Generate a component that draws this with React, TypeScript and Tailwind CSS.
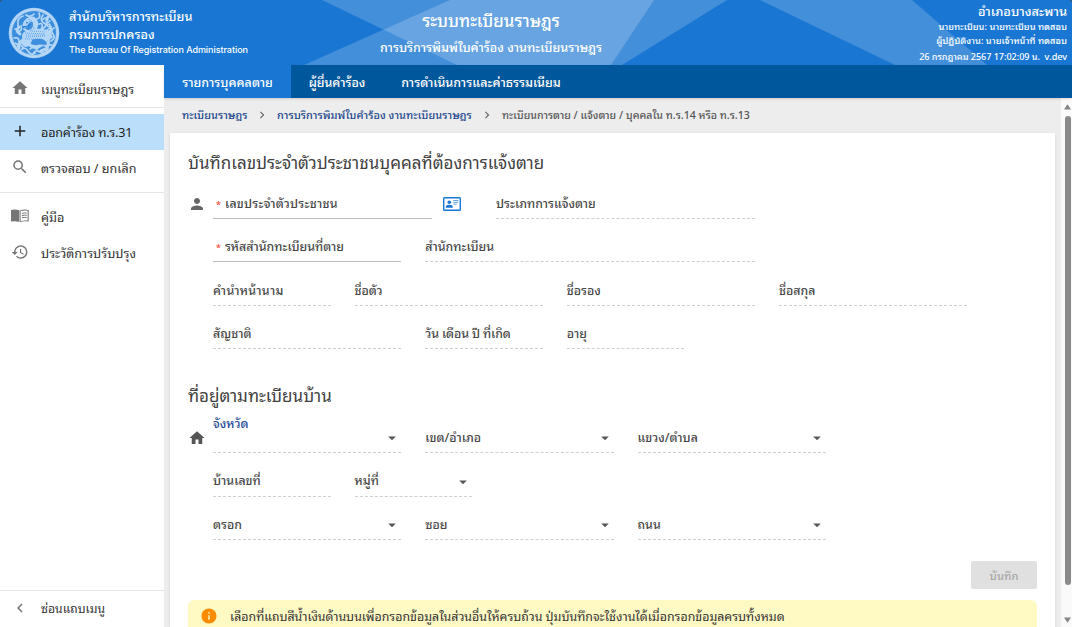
import type { ReactNode } from "react";
import {
  MdAdd,
  MdArrowDropDown,
  MdChevronLeft,
  MdChevronRight,
  MdHistory,
  MdHome,
  MdInfo,
  MdPerson,
  MdSearch,
} from "react-icons/md";

function Seal() {
  return (
    <svg viewBox="0 0 52 52" className="size-[52px] shrink-0">
      <circle cx="26" cy="26" r="25.3" fill="#a9cff3" />
      <circle cx="26" cy="26" r="22" fill="#3d8edd" />
      <circle cx="26" cy="26" r="23.6" fill="none" stroke="#c6e0f8" strokeWidth="1.2" strokeDasharray="1.2 1" />
      <g fill="none" stroke="#b4d7f7" strokeLinecap="round" strokeLinejoin="round">
        <path strokeWidth="5" d="M17 18q2-6 8-6 4 3 2 8l-2 7" />
        <path strokeWidth="10" d="M19 29q8-4 20-1M20 30l-2 5" />
        <path strokeWidth="3" d="M15 33q-6 4-4 8M20 37q5 4 12 2M37 32q6 3 1 10l-5 2M40 27q5-4 1-9t-1-8M12 27q-5-3-1-7" />
        <path strokeWidth="1.7" d="M7 22q4 1 3-5t5-8M10 25q5-2 3-6M31 6q2 5-2 6M35 8q-4 5 1 8t-3 6M42 14q-5 1-2 5t-4 5M46 21q-4 2-1 6t-2 7M6 31q5-1 5 3t5 7M13 43q4-4 7 1t7 2M25 47q2-5 7-2t7-2M44 38q-5-1-4 4M18 8q4 3 8-1M31 17q4-2 3 4M16 22q5 4 8 0M29 42q4-5 9-3M22 42q3-3 6 0M7 36q3 1 4 5M34 13q3-3 5-1M44 30q-4 2-3 5" />
      </g>
      <g fill="none" stroke="#4b96df" strokeWidth=".8" strokeDasharray="1 1">
        <path d="M17 26l20 1M18 28l20 0M18 30l20-1M17 32l18 0M22 24l16 1M18 16l7 4M23 13l3 9M21 12l3 12M13 37l5 4M35 39l5-6M41 23l-1-9" />
      </g>
      <path d="M18 15l2 1M22 17l-2 3M14 20l5-1" stroke="#1976d2" strokeWidth="1" />
    </svg>
  );
}

function Header() {
  return (
    <header className="relative flex h-[65px] shrink-0 overflow-hidden bg-[#1976d2] text-white">
      <svg viewBox="0 0 1072 65" className="absolute inset-0 h-[65px] w-[1072px]">
        <g fill="#fff" fillOpacity=".19">
          <path d="M322 0H654L611 65H457Z" />
          <path d="M304 65L450 0H727L622 65Z" />
          <path d="M760 0H912L987 65H895Z" />
        </g>
        <path d="M0 0H3Q0 0 0 3ZM1072 0h-3q3 0 3 3Z" fill="#44484d" />
      </svg>
      <div className="relative flex w-[360px] shrink-0 pt-[7px] pl-2">
        <Seal />
        <div className="flex flex-col pl-[9px] text-[12.6px] leading-[18px] font-medium whitespace-nowrap">
          <span className="-mt-px">สำนักบริหารการทะเบียน</span>
          <span>กรมการปกครอง</span>
          <span className="font-['Inter'] text-[9px] leading-[16px] tracking-[-0.05px]">The Bureau Of Registration Administration</span>
        </div>
      </div>
      <div className="relative flex w-[262px] shrink-0 flex-col items-center pt-[6px] whitespace-nowrap">
        <span className="text-[16.8px] leading-[27px] font-medium">ระบบทะเบียนราษฎร</span>
        <span className="text-[12.5px] leading-[27px] font-medium">การบริการพิมพ์ใบคำร้อง งานทะเบียนราษฎร</span>
      </div>
      <div className="relative flex flex-1 flex-col items-end pt-[2px] pr-[5px] text-[9.25px] leading-[14px] font-medium whitespace-nowrap">
        <span className="text-[12.8px] leading-[17px]">อำเภอบางสะพาน</span>
        <span>นายทะเบียน: นายทะเบียน ทดสอบ</span>
        <span>ผู้ปฏิบัติงาน: นายเจ้าหน้าที่ ทดสอบ</span>
        <span className="text-[9.1px] leading-[18px] tracking-[-0.06px]">26 กรกฎาคม 2567 17:02:09 น.&nbsp; v.dev</span>
      </div>
    </header>
  );
}

function MenuItem({ icon, children, active = false }: { icon: ReactNode; children: ReactNode; active?: boolean }) {
  return (
    <div
      className={`flex h-9 shrink-0 items-center gap-[11px] pl-[10px] text-[12.6px] whitespace-nowrap ${
        active ? "bg-[#bbdefb] text-[#222]" : "text-[#333]"
      }`}
    >
      <span className={`-mt-[2px] flex w-5 justify-center ${active ? "text-[#222]" : "text-[#757575]"}`}>{icon}</span>
      <span className="pb-[2px]">{children}</span>
    </div>
  );
}

function Sidebar() {
  return (
    <aside className="flex w-[164px] shrink-0 flex-col bg-white">
      <div className="border-b border-[#e5e5e5] pt-[6px]">
        <MenuItem icon={<MdHome size={18} />}>
          <span className="text-[12.4px] leading-[21px]">เมนูทะเบียนราษฎร</span>
        </MenuItem>
      </div>
      <div className="border-b border-[#e5e5e5] pt-[6px] pb-[6px]">
        <MenuItem active icon={<MdAdd size={18} />}>
          <span className="tracking-[-0.2px]">ออกคำร้อง ท.ร.31</span>
        </MenuItem>
        <MenuItem icon={<MdSearch size={18} />}>ตรวจสอบ / ยกเลิก</MenuItem>
      </div>
      <div className="pt-[6px]">
        <MenuItem
          icon={
            <svg viewBox="0 0 18 14" className="h-[14px] w-[18px]">
              <path fill="#757575" d="M0 .9Q4.5 0 8.5 1.2V13Q4.5 11.8 0 12.6ZM9.2 1.2Q13.2 0 17.7 .9V12.6Q13.2 11.8 9.2 13Z" />
              <path fill="#fff" d="M9.8 2.1Q13.2 1.1 16.6 1.7V11.6Q13 11 9.8 12Z" />
              <path stroke="#757575" fill="none" strokeWidth="1" d="M11 4.4q2.3-.7 4.7-.3M11 6.6q2.3-.7 4.7-.3M11 8.8q2.3-.7 4.7-.3" />
            </svg>
          }
        >
          คู่มือ
        </MenuItem>
        <MenuItem icon={<MdHistory size={18} />}>ประวัติการปรับปรุง</MenuItem>
      </div>
      <div className="mt-auto border-t border-[#e5e5e5]">
        <MenuItem icon={<MdChevronLeft size={18} />}>
          <span className="text-[12.2px]">ซ่อนแถบเมนู</span>
        </MenuItem>
      </div>
    </aside>
  );
}

function Field({
  label,
  span,
  required = false,
  select = false,
  floating = false,
  spacing = "",
}: {
  label: string;
  span: string;
  required?: boolean;
  select?: boolean;
  floating?: boolean;
  spacing?: string;
}) {
  return (
    <div
      className={`flex h-[31px] items-center justify-between border-b text-[12.35px] font-medium whitespace-nowrap ${span} ${
        required ? "border-solid border-[#bdbdbd]" : "border-dashed border-[#cfcfcf]"
      }`}
    >
      <span className={floating ? "-mt-[28px] text-[#1f4d92]" : "text-[#484848]"}>
        {required && <span className="pr-[4px] pl-[3px] text-[9px] text-[#f44336]">*</span>}
        <span className={spacing}>{label}</span>
      </span>
      {select && <MdArrowDropDown size={18} className="mt-[2px] text-[#555]" />}
    </div>
  );
}

function IdCard() {
  return (
    <svg viewBox="0 0 18 14" className="ml-[11px] h-[14px] w-[18px]">
      <rect x=".7" y=".7" width="16.6" height="12.6" rx=".8" fill="#fff" stroke="#1976d2" strokeWidth="1.4" />
      <circle cx="6.3" cy="5.2" r="1.8" fill="#1976d2" />
      <path d="M2.8 10.8V9.8q0-2 3.5-2t3.5 2v1Z" fill="#1976d2" />
      <path d="M10.3 3.5h5M10.3 5.3h5M10.3 7.1h3.5" stroke="#64a3e4" strokeWidth="1" />
    </svg>
  );
}

function Row({ children }: { children: ReactNode }) {
  return <div className="grid grid-cols-12 gap-x-6">{children}</div>;
}

function Form() {
  return (
    <section className="mr-[6px] ml-[6px] flex h-[494px] flex-col bg-white px-[18px] shadow-sm">
      <h2 className="mt-[16px] h-[27px] shrink-0 text-[17px] leading-[26px] whitespace-nowrap text-[#424242]">
        บันทึกเลขประจำตัวประชาชนบุคคลที่ต้องการแจ้งตาย
      </h2>
      <div className="mt-3 flex shrink-0">
        <MdPerson size={18} className="mt-[7px] mr-[7px] shrink-0 text-[#666]" />
        <div className="flex w-[825px] shrink-0 flex-col gap-[12.4px]">
          <Row>
            <div className="col-span-4 flex items-center">
              <Field span="w-[219px]" label="เลขประจำตัวประชาชน" required spacing="tracking-[0.22px]" />
              <IdCard />
            </div>
            <Field span="col-span-4" label="ประเภทการแจ้งตาย" />
          </Row>
          <Row>
            <Field span="col-span-3" label="รหัสสำนักทะเบียนที่ตาย" required />
            <Field span="col-span-5" label="สำนักทะเบียน" />
          </Row>
          <Row>
            <Field span="col-span-2" label="คำนำหน้านาม" spacing="tracking-[0.27px]" />
            <Field span="col-span-3" label="ชื่อตัว" />
            <Field span="col-span-3" label="ชื่อรอง" />
            <Field span="col-span-3" label="ชื่อสกุล" />
          </Row>
          <Row>
            <Field span="col-span-3" label="สัญชาติ" />
            <Field span="col-span-2" label="วัน เดือน ปี ที่เกิด" spacing="tracking-[-0.12px]" />
            <Field span="col-span-2" label="อายุ" />
          </Row>
        </div>
      </div>
      <h2 className="mt-[33px] h-[28px] shrink-0 text-[17px] leading-[26px] whitespace-nowrap text-[#424242]">ที่อยู่ตามทะเบียนบ้าน</h2>
      <div className="mt-3 flex shrink-0">
        <MdHome size={18} className="mt-[7px] mr-[7px] shrink-0 text-[#555]" />
        <div className="flex w-[825px] shrink-0 flex-col gap-[12.4px]">
          <Row>
            <Field span="col-span-3" label="จังหวัด" select floating />
            <Field span="col-span-3" label="เขต/อำเภอ" select />
            <Field span="col-span-3" label="แขวง/ตำบล" select />
          </Row>
          <Row>
            <Field span="col-span-2" label="บ้านเลขที่" />
            <Field span="col-span-2" label="หมู่ที่" select />
          </Row>
          <Row>
            <Field span="col-span-3" label="ตรอก" select />
            <Field span="col-span-3" label="ซอย" select />
            <Field span="col-span-3" label="ถนน" select />
          </Row>
        </div>
      </div>
      <button className="mt-[21px] flex h-7 w-[66px] shrink-0 items-center justify-center self-end rounded-[2px] bg-[#e0e0e0] text-[11.2px] font-medium text-[#a6a6a6]">
        บันทึก
      </button>
      <div className="mt-[11px] flex h-[30px] shrink-0 items-start overflow-hidden rounded-t-[6px] bg-[#fff9c4] pl-3 text-[12.4px] whitespace-nowrap text-[#333]">
        <MdInfo size={18} className="mt-[7px] mr-3 text-[#fb8c00]" />
        <span className="leading-[32px]">
          เลือกที่แถบสีน้ำเงินด้านบนเพื่อกรอกข้อมูลในส่วนอื่นให้ครบถ้วน ปุ่มบันทึกจะใช้งานได้เมื่อกรอกข้อมูลครบทั้งหมด
        </span>
      </div>
    </section>
  );
}

export default function App() {
  return (
    <div className="flex h-[627px] w-[1072px] flex-col overflow-hidden bg-[#ededed] font-['Noto_Sans_Thai_Looped','Loma','Sarabun','Noto_Sans_Thai','Noto_Sans',sans-serif]">
      <Header />
      <div className="flex min-h-0 flex-1">
        <Sidebar />
        <main className="flex min-w-0 flex-1 flex-col">
          <nav className="z-10 flex h-[33px] shrink-0 bg-[#01579b] text-[12.5px] leading-[33px] font-medium whitespace-nowrap text-white shadow">
            <span className="w-[127px] bg-[#1976d2] text-center">รายการบุคคลตาย</span>
            <span className="w-[92px] text-center text-[12.4px]">ผู้ยื่นคำร้อง</span>
            <span className="w-[196px] text-center">การดำเนินการและค่าธรรมเนียม</span>
          </nav>
          <div className="flex min-h-0 flex-1">
            <div className="min-w-0 flex-1 overflow-hidden">
              <div className="flex h-[35px] items-center pb-[2px] pl-[18px] text-[10.9px] font-medium whitespace-nowrap text-[#21468b]">
                <span className="w-[65px]">ทะเบียนราษฎร</span>
                <MdChevronRight size={14} className="mx-2 mt-px text-[#666]" />
                <span className="w-[195px] tracking-[0.04px]">การบริการพิมพ์ใบคำร้อง งานทะเบียนราษฎร</span>
                <MdChevronRight size={14} className="mx-2 mt-px text-[#666]" />
                <span className="text-[10.6px] text-[#555]">ทะเบียนการตาย / แจ้งตาย / บุคคลใน ท.ร.14 หรือ ท.ร.13</span>
              </div>
              <Form />
            </div>
            <div className="flex w-[11px] shrink-0 flex-col items-center bg-[#fafafa] pt-[6px] pl-[2px]">
              <svg viewBox="0 0 7 6" className="h-[6px] w-[7px]"><path d="M3.5 .3L7 5.5H0Z" fill="#858585" /></svg>
              <div className="mt-[6px] h-[469px] w-[6px] rounded-full bg-[#8a8a8a]" />
              <svg viewBox="0 0 7 6" className="mt-8 h-[6px] w-[7px]"><path d="M3.5 5.7L0 .5H7Z" fill="#858585" /></svg>
            </div>
          </div>
        </main>
      </div>
    </div>
  );
}
